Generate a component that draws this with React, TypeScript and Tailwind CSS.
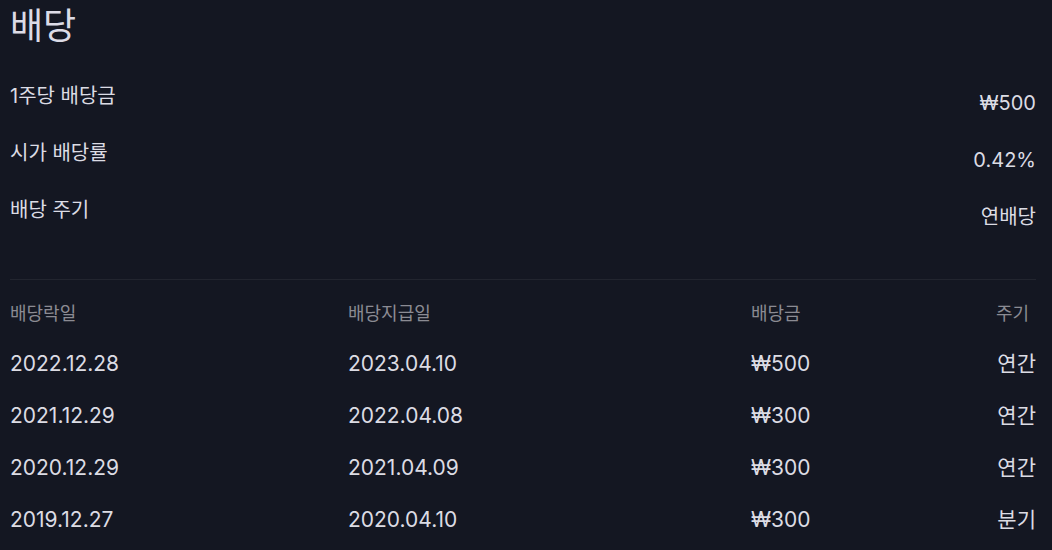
import React from "react";

const font = { fontFamily: 'Inter, "Noto Sans CJK KR", "Noto Sans", sans-serif' };

const summary = [
  ["1주당 배당금", "₩500"],
  ["시가 배당률", "0.42%"],
  ["배당 주기", "연배당"],
];

const rows = [
  ["2022.12.28", "2023.04.10", "₩500", "연간"],
  ["2021.12.29", "2022.04.08", "₩300", "연간"],
  ["2020.12.29", "2021.04.09", "₩300", "연간"],
  ["2019.12.27", "2020.04.10", "₩300", "분기"],
];

export default function App() {
  return (
    <div className="w-[1052px] h-[550px] overflow-hidden bg-[#141722] text-[#dcdce4] pl-[10px] pr-[16px]" style={font}>
      <h1 className="text-[36px] leading-[52px] font-normal text-[#dcdbe6]">배당</h1>
      <div className="mt-[30px] flex flex-col gap-[21px]">
        {summary.map(([k, v]) => (
          <div key={k} className="flex justify-between items-start text-[20px] leading-[29px]">
            <span>{k}</span>
            <span className="mt-[7px]">{v}</span>
          </div>
        ))}
      </div>
      <div className="mt-[47px] border-t border-[#22252f]" />
      <div className="mt-[16px] grid grid-cols-[338px_403px_1fr_auto] text-[21px]">
        <div className="text-[#8b8b93] text-[18px] leading-[36px] pb-[6px]">배당락일</div>
        <div className="text-[#8b8b93] text-[18px] leading-[36px] pb-[6px]">배당지급일</div>
        <div className="text-[#8b8b93] text-[18px] leading-[36px] pb-[6px]">배당금</div>
        <div className="text-[#8b8b93] text-[18px] leading-[36px] pb-[6px] text-right pr-[7px]">주기</div>
        {rows.map((r) => (
          <React.Fragment key={r[0]}>
            <div className="leading-[52px]">{r[0]}</div>
            <div className="leading-[52px]">{r[1]}</div>
            <div className="leading-[52px]">{r[2]}</div>
            <div className="leading-[52px] text-right">{r[3]}</div>
          </React.Fragment>
        ))}
      </div>
    </div>
  );
}
